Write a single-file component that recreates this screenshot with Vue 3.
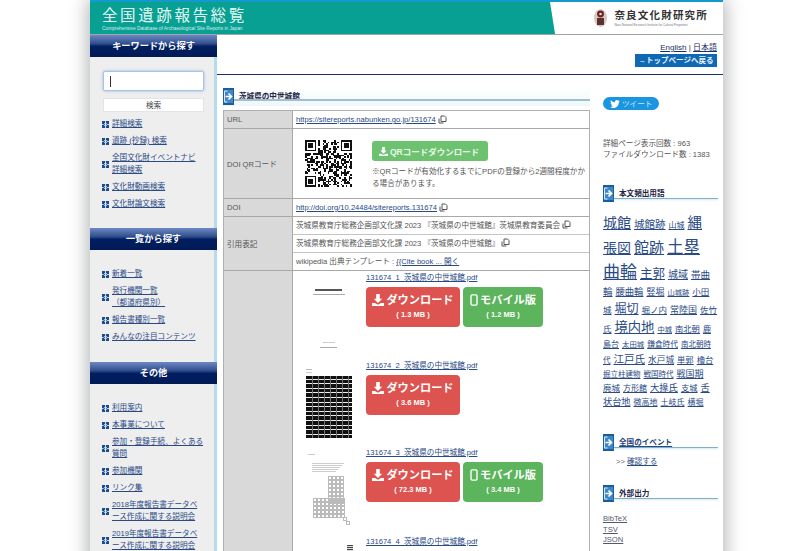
<template>
<div class="page">
  <div class="wrap">
    <header class="head">
      <div class="head-left">
        <div class="logo-title">全国遺跡報告総覧</div>
        <div class="logo-sub">Comprehensive Database of Archaeological Site Reports in Japan</div>
      </div>
      <div class="head-right">
        <svg class="seal" width="15" height="20" viewBox="0 0 14 20">
          <ellipse cx="7" cy="10" rx="6.5" ry="9" fill="#d8c8c0"/>
          <circle cx="7" cy="6" r="3.4" fill="#6a1f22"/>
          <rect x="3.5" y="10" width="7" height="7" fill="#5a3030"/>
          <circle cx="7" cy="6" r="1.3" fill="#e8e0d8"/>
        </svg>
        <div>
          <div class="nara">奈良文化財研究所</div>
          <div class="nara-sub">Nara National Research Institute for Cultural Properties</div>
        </div>
      </div>
    </header>
    <div class="body">
      <aside class="side">
        <section v-for="s in sideGroups" :key="s.title" class="side-sec">
          <h2 class="side-title">{{ s.title }}</h2>
          <div v-if="s.search" class="search">
            <div class="search-input"><span class="caret"></span></div>
            <div class="search-btn">検索</div>
          </div>
          <ul class="side-list" :class="{ pad: !s.search }">
            <li v-for="l in s.links" :key="l">
              <svg class="bullet" width="7" height="7" viewBox="0 0 7 7">
                <rect width="7" height="7" fill="#1b4c8c"/>
                <path d="M3.5 0v7M0 3.5h1.5M5.500 3.5H7" stroke="#cfdcec" stroke-width="1"/>
                <path d="M2 2.200l1.500 1.300L2 4.800M4 2.200l1.500 1.300L4 4.800" fill="none" stroke="#fff" stroke-width=".7"/>
              </svg>
              <a>{{ l }}</a>
            </li>
          </ul>
        </section>
      </aside>
      <div class="main">
        <div class="topbar">
          <div class="lang"><a>English</a> | <a>日本語</a></div>
          <div class="back">→トップページへ戻る</div>
        </div>
        <div class="cols">
          <div class="center">
            <div class="sec-title wide">
              <svg class="arrow" width="11" height="17" viewBox="0 0 11 17"><use href="#arrow-ic"/></svg>
              <span>茨城県の中世城館</span>
            </div>
            <div class="info">
              <div class="row">
                <div class="th">URL</div>
                <div class="td line"><a>https://sitereports.nabunken.go.jp/131674</a><svg class="copy" width="9" height="9" viewBox="0 0 9 9"><use href="#copy-ic"/></svg></div>
              </div>
              <div class="row">
                <div class="th">DOI QRコード</div>
                <div class="td qr-cell">
                  <svg class="qr" width="47" height="47" viewBox="0 0 29 29" shape-rendering="crispEdges">
                    <rect v-for="(c, i) in qrCells" :key="i" :x="c.x" :y="c.y" width="1" height="1" fill="#111"/>
                  </svg>
                  <div class="qr-text">
                    <div class="qr-btn"><svg width="9" height="9" viewBox="0 0 10 10"><use href="#dl-ic"/></svg>QRコードダウンロード</div>
                    <p>※QRコードが有効化するまでにPDFの登録から2週間程度かかる場合があります。</p>
                  </div>
                </div>
              </div>
              <div class="row">
                <div class="th">DOI</div>
                <div class="td line"><a>http://doi.org/10.24484/sitereports.131674</a><svg class="copy" width="9" height="9" viewBox="0 0 9 9"><use href="#copy-ic"/></svg></div>
              </div>
              <div class="row">
                <div class="th">引用表記</div>
                <div class="td stack">
                  <div class="sub">茨城県教育庁総務企画部文化課 2023 『茨城県の中世城館』茨城県教育委員会<svg class="copy" width="9" height="9" viewBox="0 0 9 9"><use href="#copy-ic"/></svg></div>
                  <div class="sub">茨城県教育庁総務企画部文化課 2023 『茨城県の中世城館』<svg class="copy" width="9" height="9" viewBox="0 0 9 9"><use href="#copy-ic"/></svg></div>
                  <div class="sub">wikipedia 出典テンプレート : <a>{{ cite }}</a></div>
                </div>
              </div>
              <div class="row last">
                <div class="th"></div>
                <div class="td files">
                  <div v-for="f in files" :key="f.name" class="file" :style="{ height: f.h + 'px' }">
                    <div class="thumb">
                      <svg width="48" height="84" viewBox="0 0 48 84" shape-rendering="crispEdges">
                        <g v-if="f.kind === 'cover'">
                          <rect x="10" y="18" width="27" height="2" fill="#555"/>
                          <rect x="8" y="23" width="32" height="1" fill="#aaa"/>
                          <rect x="18" y="71" width="12" height="1" fill="#ccc"/>
                          <rect x="15" y="76" width="17" height="1" fill="#aaa"/>
                        </g>
                        <g v-else-if="f.kind === 'dark'">
                          <rect x="1" y="10" width="6" height="1" fill="#bbb"/>
                          <rect x="1" y="13" width="6" height="1" fill="#ccc"/>
                          <rect x="1" y="17" width="46" height="62" fill="#111"/>
                          <rect v-for="n in 13" :key="n" x="1" :y="15 + n * 4.6" width="46" height="1" fill="#eee"/>
                          <rect v-for="n in 7" :key="'v' + n" :x="1 + n * 6" y="17" width="1" height="62" fill="#777"/>
                        </g>
                        <g v-else-if="f.kind === 'map'">
                          <rect x="3" y="8" width="7" height="1" fill="#ccc"/>
                          <rect v-for="n in 5" :key="n" :x="7" :y="15 + n * 2" :width="34 - n * 2" height="1" fill="#ccc"/>
                          <rect v-for="(c, i) in mapCells" :key="'m' + i" :x="c.x" :y="c.y" width="3" height="3" fill="none" stroke="#bbb" stroke-width="1"/>
                        </g>
                        <g v-else>
                          <rect x="42" y="10" width="8" height="8" fill="#444"/>
                          <rect v-for="n in 3" :key="n" x="42" :y="9 + n * 2" width="8" height="1" fill="#ddd"/>
                        </g>
                      </svg>
                    </div>
                    <div class="file-r">
                      <a class="file-name">{{ f.name }}</a>
                      <div v-if="f.pdf" class="btns">
                        <div class="dl red">
                          <div class="dl-main"><svg width="12" height="12" viewBox="0 0 10 10"><use href="#dl-ic"/></svg>ダウンロード</div>
                          <div class="dl-size">( {{ f.pdf }} )</div>
                        </div>
                        <div v-if="f.mobile" class="dl green">
                          <div class="dl-main"><svg width="8" height="12" viewBox="0 0 9 14"><rect x="1" y="1" width="7" height="12" rx="1.2" fill="none" stroke="#fff" stroke-width="1.6"/></svg>モバイル版</div>
                          <div class="dl-size">( {{ f.mobile }} )</div>
                        </div>
                      </div>
                    </div>
                  </div>
                </div>
              </div>
            </div>
          </div>
          <div class="right">
            <div class="tweet"><svg width="10" height="8" viewBox="0 0 24 20"><path d="M24 2.400c-.9.4-1.800.7-2.800.8 1-.6 1.800-1.600 2.200-2.700-1 .6-2 1-3.100 1.200C19.300.7 18 0 16.600 0c-2.700 0-4.900 2.200-4.900 4.900 0 .4 0 .8.100 1.100C7.700 5.800 4.100 3.900 1.700.9 1.200 1.600 1 2.500 1 3.400c0 1.700.9 3.200 2.200 4.100-.8 0-1.600-.2-2.200-.6v.1c0 2.400 1.700 4.400 3.900 4.800-.4.100-.8.200-1.300.2-.3 0-.6 0-.9-.1.600 2 2.400 3.400 4.600 3.400-1.700 1.300-3.800 2.100-6.100 2.100-.4 0-.8 0-1.200-.1C2.200 19.200 4.800 20 7.500 20c9.100 0 14-7.500 14-14v-.6c1-.7 1.800-1.600 2.500-3z" fill="#fff"/></svg>ツイート</div>
            <div class="stats">
              <div>詳細ページ表示回数 : 963</div>
              <div>ファイルダウンロード数 : 1383</div>
            </div>
            <div class="sec-title">
              <svg class="arrow" width="11" height="17" viewBox="0 0 11 17"><use href="#arrow-ic"/></svg>
              <span>本文頻出用語</span>
            </div>
            <div class="tags">
              <a v-for="t in tags" :key="t.t" :class="{ keep: t.keep }" :style="{ fontSize: t.s + 'px' }">{{ t.t }}</a>
            </div>
            <div class="sec-title">
              <svg class="arrow" width="11" height="17" viewBox="0 0 11 17"><use href="#arrow-ic"/></svg>
              <a class="sec-link">全国のイベント</a>
            </div>
            <div class="confirm">&gt;&gt; <a>確認する</a></div>
            <div class="sec-title">
              <svg class="arrow" width="11" height="17" viewBox="0 0 11 17"><use href="#arrow-ic"/></svg>
              <span>外部出力</span>
            </div>
            <div class="export">
              <a>BibTeX</a>
              <a>TSV</a>
              <a>JSON</a>
            </div>
          </div>
        </div>
      </div>
    </div>
  </div>
  <svg width="0" height="0" class="defs">
    <defs>
      <g id="copy-ic">
        <path d="M1 3.500v4.500h4.500M3 1h3.500L8 2.500V6.500H3z" fill="none" stroke="#555" stroke-width="1"/>
      </g>
      <g id="dl-ic">
        <path d="M3.500 0h3v4h2L5 7.500 1.500 4h2zM0 7.500h2.500L5 9l2.500-1.500H10V10H0z" fill="#fff"/>
      </g>
      <g id="arrow-ic">
        <rect width="11" height="17" fill="#1b5c9c"/>
        <rect x="1" y="2" width="9" height="13" fill="#3d88c8"/>
        <path d="M1.500 3h3M1.500 14h3M1.500 3v11" fill="none" stroke="#dfeaf5" stroke-width="1"/>
        <path d="M2.500 8.500h5M5.500 5.500l3 3-3 3" fill="none" stroke="#fff" stroke-width="1.700"/>
      </g>
    </defs>
  </svg>
</div>
</template>
<script setup>
const cite = '{{Cite book ... 開く'

const sideGroups = [
  {
    title: 'キーワードから探す',
    search: true,
    links: ['詳細検索', '遺跡 (抄録) 検索', '全国文化財イベントナビ\n詳細検索', '文化財動画検索', '文化財論文検索'],
  },
  {
    title: '一覧から探す',
    links: ['新着一覧', '発行機関一覧\n（都道府県別）', '報告書種別一覧', 'みんなの注目コンテンツ'],
  },
  {
    title: 'その他',
    links: ['利用案内', '本事業について', '参加・登録手続、よくある\n質問', '参加機関', 'リンク集', '2018年度報告書データベ\nース作成に関する説明会', '2019年度報告書データベ\nース作成に関する説明会'],
  },
]

const files = [
  { name: '131674_1_茨城県の中世城館.pdf', pdf: '1.3 MB', mobile: '1.2 MB', kind: 'cover', h: 88 },
  { name: '131674_2_茨城県の中世城館.pdf', pdf: '3.6 MB', kind: 'dark', h: 87 },
  { name: '131674_3_茨城県の中世城館.pdf', pdf: '72.3 MB', mobile: '3.4 MB', kind: 'map', h: 89 },
  { name: '131674_4_茨城県の中世城館.pdf', kind: 'last', h: 40 },
]

const tags = [
  { t: '城館', s: 14 }, { t: '城館跡', s: 10.5 }, { t: '山城', s: 8 }, { t: '縄', s: 14.5 },
  { t: '張図', s: 14 }, { t: '館跡', s: 15 }, { t: '土塁', s: 16.5 }, { t: '曲輪', s: 17 },
  { t: '主郭', s: 12.5 }, { t: '城域', s: 10 }, { t: '帯曲輪', s: 9.5 }, { t: '腰曲輪', s: 9.3 },
  { t: '竪堀', s: 9 }, { t: '山城跡', s: 7.3 }, { t: '小田城', s: 8.5 }, { t: '堀切', s: 12 },
  { t: '堀ノ内', s: 8.5 }, { t: '常陸国', s: 9 }, { t: '佐竹氏', s: 8.5 }, { t: '境内地', s: 13.3 },
  { t: '中城', s: 7.3 }, { t: '南北朝', s: 8.3 }, { t: '鹿島台', s: 8 }, { t: '太田城', s: 7.4 },
  { t: '鎌倉時代', s: 7.7 }, { t: '南北朝時代', s: 7.5 }, { t: '江戸氏', s: 10.5 }, { t: '水戸城', s: 8.7 },
  { t: '単郭', s: 8.3 }, { t: '櫓台', s: 8.3 }, { t: '掘立柱建物', s: 7.5 }, { t: '戦国時代', s: 7.5 },
  { t: '戦国期', s: 9 }, { t: '廃城', s: 8.5, keep: true }, { t: '方形館', s: 8 }, { t: '大掾氏', s: 9.3 },
  { t: '支城', s: 8.3 }, { t: '舌状台地', s: 9.2 }, { t: '微高地', s: 8 }, { t: '土岐氏', s: 8 },
  { t: '横堀', s: 8 },
]

// QRコードの見た目用に、固定シードで埋める
const qrCells = []
let seed = 131674
const next = () => {
  seed = (seed * 1103515245 + 12345) % 2147483648
  return seed / 2147483648
}
const finder = (x, y) => {
  for (let j = 0; j < 7; j++) {
    for (let i = 0; i < 7; i++) {
      const edge = i === 0 || i === 6 || j === 0 || j === 6
      const core = i >= 2 && i <= 4 && j >= 2 && j <= 4
      if (edge || core) qrCells.push({ x: x + i, y: y + j })
    }
  }
}
finder(0, 0)
finder(22, 0)
finder(0, 22)
for (let y = 0; y < 29; y++) {
  for (let x = 0; x < 29; x++) {
    const inFinder = (x < 8 && y < 8) || (x > 20 && y < 8) || (x < 8 && y > 20)
    if (!inFinder && next() > 0.5) qrCells.push({ x, y })
  }
}

// 地図サムネイルのマス目
const mapCells = []
for (let y = 30; y < 56; y += 4) {
  for (let x = 23; x < 38; x += 4) mapCells.push({ x, y })
}
for (let y = 52; y < 71; y += 4) {
  for (let x = 8; x < 37; x += 4) mapCells.push({ x, y })
}
mapCells.push({ x: 38, y: 71 }, { x: 41, y: 75 })
</script>
<style scoped>
.page {
  width: 800px;
  height: 551px;
  overflow: hidden;
  font-family: "Liberation Sans", "Noto Sans CJK JP", sans-serif;
  background: #fff;
}
.defs {
  position: absolute;
}
.wrap {
  width: 633px;
  margin-left: 90px;
  box-shadow: 0 0 18px 2px #b0b2b5;
  height: 700px;
  background: #fff;
}
a {
  color: #2a4a85;
  text-decoration: underline;
}
.head {
  height: 35px;
  display: flex;
  justify-content: space-between;
  border-top: 2px solid #119acb;
  border-bottom: 1px solid #9ea6a6;
  background: #07a092;
  box-sizing: border-box;
}
.head-left {
  padding: 3.5px 0 0 12px;
  color: #fff;
}
.logo-title {
  font-size: 15.5px;
  line-height: 20px;
  letter-spacing: 2.6px;
  white-space: nowrap;
  color: #e4f6f3;
}
.logo-sub {
  font-size: 4.8px;
  line-height: 6px;
  white-space: nowrap;
  color: #d6efec;
}
.head-right {
  width: 173px;
  background: #fff;
  clip-path: polygon(0 0, 100% 0, 100% 100%, 5px 100%);
  display: flex;
  align-items: center;
  justify-content: flex-end;
  gap: 6px;
  padding-right: 15px;
  box-sizing: border-box;
}
.nara {
  font-weight: 700;
  font-size: 10.5px;
  line-height: 13px;
  letter-spacing: 1.2px;
  white-space: nowrap;
  color: #333;
}
.nara-sub {
  font-size: 3px;
  line-height: 5px;
  margin-top: 1px;
  color: #777;
  white-space: nowrap;
}
.body {
  display: flex;
}
.side {
  width: 127px;
  flex: none;
  background: #eeeeef;
  border-right: 3px solid #b5dcec;
  box-sizing: border-box;
}
.side-title {
  margin: 0 -3px 0 0;
  height: 22px;
  font-size: 9.2px;
  line-height: 23px;
  font-weight: 700;
  text-align: center;
  color: #fff;
  background: linear-gradient(#6d89c4 0, #33508f 38%, #011e61 52%, #001a55 100%);
}
.side-sec {
  padding-bottom: 14px;
}
.side-sec:first-child {
  padding-bottom: 13px;
}
.search {
  padding: 14px 10px 0 13px;
}
.search-input {
  height: 20px;
  background: #fff;
  border: 1px solid #a8c4e4;
  border-radius: 2px;
  box-shadow: 0 0 3px #8fb2de;
  display: flex;
  align-items: center;
  padding-left: 6px;
  box-sizing: border-box;
}
.caret {
  width: 1px;
  height: 11px;
  background: #333;
}
.search-btn {
  margin-top: 7px;
  height: 14px;
  line-height: 13px;
  background: #fff;
  border: 1px solid #e4e4e4;
  box-sizing: border-box;
  text-align: center;
  font-size: 7.6px;
  color: #444;
}
.side-list {
  list-style: none;
  margin: 0;
  padding: 6px 8px 0 12px;
}
.side-list.pad {
  padding-top: 18px;
}
.side-list li {
  display: flex;
  align-items: center;
  gap: 3px;
  margin-bottom: 5px;
  font-size: 7.6px;
  line-height: 12px;
  min-height: 12px;
  white-space: pre-line;
}
.bullet {
  flex: none;
}
.main {
  flex: 1;
  min-width: 0;
}
.topbar {
  height: 40px;
  border-bottom: 1px solid #1c2c68;
  box-sizing: border-box;
  padding: 7px 6px 0 0;
  text-align: right;
}
.lang {
  font-size: 8px;
  line-height: 11px;
  color: #333;
}
.lang a {
  color: #1c2f66;
}
.back {
  display: inline-block;
  margin-top: 1px;
  width: 82px;
  height: 13px;
  line-height: 13px;
  background: #0f68b4;
  color: #e8f3ff;
  font-size: 7.5px;
  font-weight: 700;
  text-align: center;
  vertical-align: top;
  white-space: nowrap;
}
.cols {
  display: flex;
}
.center {
  width: 367px;
  flex: none;
  margin-left: 6px;
  padding-top: 13px;
}
.sec-title {
  display: flex;
  align-items: flex-start;
  gap: 5px;
  height: 18px;
  font-size: 7.6px;
  line-height: 17px;
  font-weight: 700;
  color: #224;
  position: relative;
}
.sec-title::after {
  content: "";
  position: absolute;
  left: 11px;
  right: 0;
  top: 13px;
  height: 1px;
  background: #7fb0cc;
  box-shadow: 0 1px 2px #c4dcea;
}
.sec-title.wide {
  background: linear-gradient(#fff 0, #eff7fb 100%);
  margin-bottom: 4px;
}
.sec-title.wide::after {
  top: 11px;
  height: 2px;
  background: #a3bfcd;
  box-shadow: 0 4px 0 -1px #c2d3dc;
}
.arrow {
  flex: none;
}
.sec-link {
  color: #1f3f7a;
}
.info {
  border: 1px solid #b0b0b0;
  border-bottom: none;
  font-size: 7.6px;
  color: #555;
  background: #fff;
}
.row {
  display: flex;
  border-bottom: 1px solid #a8a8a8;
}
.row.last {
  border-bottom: none;
}
.th {
  width: 69px;
  flex: none;
  background: #d9d9d9;
  display: flex;
  align-items: center;
  padding-left: 3px;
  box-sizing: border-box;
  border-right: 1px solid #a8a8a8;
}
.td {
  flex: 1;
  min-width: 0;
}
.line {
  height: 17px;
  padding-left: 3px;
  display: flex;
  align-items: center;
  white-space: nowrap;
}
.copy {
  margin-left: 2px;
  vertical-align: -1px;
}
.qr-cell {
  display: flex;
  height: 69px;
  padding: 11px 0 0 12px;
  box-sizing: border-box;
}
.qr {
  flex: none;
}
.qr-text {
  margin-left: 20px;
  min-width: 0;
}
.qr-btn {
  margin-top: 1px;
  width: 116px;
  height: 20px;
  background: #6cc26f;
  border-radius: 3px;
  color: #eaf7ea;
  font-size: 8.5px;
  font-weight: 700;
  display: flex;
  align-items: center;
  gap: 2px;
  padding-left: 7px;
  box-sizing: border-box;
}
.qr-text p {
  margin: 5px 0 0;
  line-height: 12px;
  width: 215px;
}
.stack .sub {
  height: 17px;
  line-height: 17px;
  padding-left: 3px;
  border-bottom: 1px solid #c4c4c4;
  white-space: nowrap;
}
.stack .sub:last-child {
  border-bottom: none;
}
.file {
  display: flex;
  padding-left: 12px;
}
.thumb {
  width: 61px;
  flex: none;
}
.file-name {
  font-size: 7.6px;
  line-height: 13px;
  display: block;
  white-space: nowrap;
}
.btns {
  display: flex;
  gap: 3px;
  margin-top: 3px;
}
.dl {
  height: 40px;
  border-radius: 4px;
  color: #fff;
  text-align: center;
  box-sizing: border-box;
  padding-top: 5px;
}
.red {
  width: 94px;
  background: #dc5350;
}
.green {
  width: 80px;
  background: #5cb45c;
}
.dl-main {
  font-size: 11.2px;
  line-height: 16px;
  font-weight: 700;
  display: flex;
  align-items: center;
  justify-content: center;
  gap: 2px;
}
.dl-size {
  font-size: 7.5px;
  line-height: 12px;
  font-weight: 700;
  margin-top: 1px;
}
.right {
  margin-left: 13px;
  width: 115px;
  flex: none;
  padding-top: 22px;
}
.tweet {
  width: 56px;
  height: 13px;
  border-radius: 7px;
  background: #1b95e0;
  color: #cfe8fa;
  font-size: 7.6px;
  display: flex;
  align-items: center;
  padding-left: 7px;
  gap: 2px;
  box-sizing: border-box;
}
.stats {
  margin-top: 28px;
  font-size: 7.6px;
  line-height: 11px;
  color: #555;
  margin-bottom: 25px;
}
.tags {
  margin: 10px 0 13px;
  line-height: 14px;
  font-size: 7.6px;
  height: 208px;
  word-break: break-all;
}
.tags a {
  margin-right: 3px;
  line-height: 1.5;
}
.tags a.keep {
  white-space: nowrap;
}
.confirm {
  padding-left: 13px;
  margin: 4px 0 18px;
  font-size: 7.6px;
  line-height: 11px;
  color: #666;
}
.export {
  margin-top: 11px;
  font-size: 7.6px;
  line-height: 10.5px;
}
.export a {
  display: block;
  color: #55586e;
}
</style>
<style>
html, body {
  margin: 0;
  overflow: hidden;
}
</style>
